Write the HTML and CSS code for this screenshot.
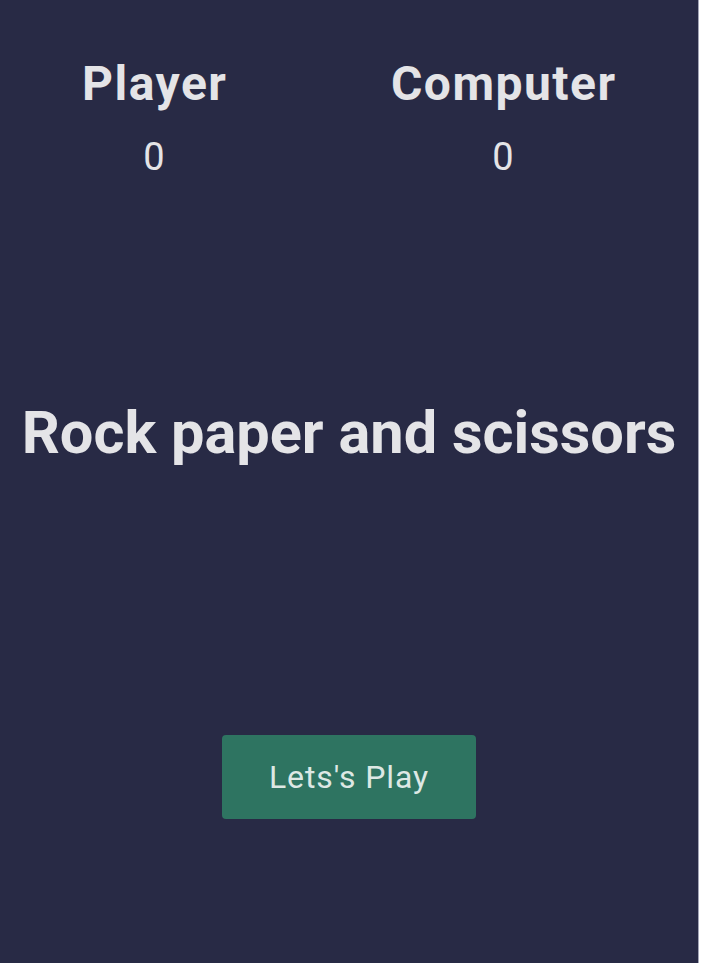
FILE: index.html
```html
<!DOCTYPE html>
<html lang="en">
<head>
<meta charset="utf-8">
<title>Rock paper and scissors</title>
<link rel="stylesheet" href="styles.css">
</head>
<body>
<main class="panel">
  <section class="scores">
    <div class="score">
      <h2 class="score-name">Player</h2>
      <p class="score-value">0</p>
    </div>
    <div class="score">
      <h2 class="score-name">Computer</h2>
      <p class="score-value">0</p>
    </div>
  </section>
  <h1 class="title">Rock paper and scissors</h1>
  <button class="play-btn" type="button">Lets's Play</button>
</main>
</body>
</html>
```

FILE: styles.css
```css
html, body {
  margin: 0;
  padding: 0;
  background: #ffffff;
}

body {
  font-family: Roboto, "Liberation Sans", sans-serif;
}

.panel {
  box-sizing: border-box;
  width: 699px;
  min-height: 100vh;
  background: #282a45;
  border-right: 1px solid #a3a5b6;
  color: #e4e4e7;
  display: flex;
  flex-direction: column;
  align-items: center;
  padding-top: 57px;
}

.scores {
  align-self: stretch;
  display: grid;
  grid-template-columns: 308px 308px;
  column-gap: 41px;
}

.score {
  display: flex;
  flex-direction: column;
  align-items: center;
}

.score-name {
  margin: 0;
  padding-left: 1.5px;
  font-size: 48px;
  font-weight: 700;
  line-height: 54px;
  letter-spacing: 1.5px;
}

.score-value {
  margin: 25px 0 0;
  font-size: 38px;
  font-weight: 400;
  line-height: 42px;
}

.title {
  margin: 219px 0 0;
  font-size: 59.5px;
  font-weight: 700;
  line-height: 72px;
  text-align: center;
}

.play-btn {
  margin-top: 266px;
  width: 254px;
  height: 84px;
  border: none;
  border-radius: 4px;
  background: #2e7461;
  color: #dde8e4;
  font-family: Roboto, "Liberation Sans", sans-serif;
  font-size: 32px;
  font-weight: 400;
  letter-spacing: 0.9px;
}
```
